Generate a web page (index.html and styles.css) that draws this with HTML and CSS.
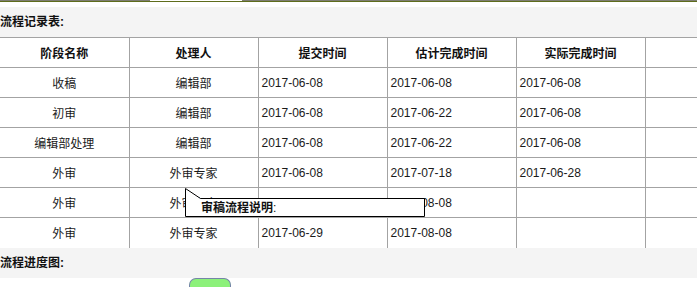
FILE: index.html
```html
<!DOCTYPE html>
<html lang="zh">
<head>
<meta charset="utf-8">
<link rel="stylesheet" href="styles.css">
</head>
<body>
<div class="tabbar"><span class="tab-active"></span></div>
<div class="page">
  <div class="band">流程记录表:</div>
  <table class="flow">
    <thead>
      <tr><th>阶段名称</th><th>处理人</th><th>提交时间</th><th>估计完成时间</th><th>实际完成时间</th><th></th></tr>
    </thead>
    <tbody>
      <tr><td class="c">收稿</td><td class="c">编辑部</td><td>2017-06-08</td><td>2017-06-08</td><td>2017-06-08</td><td></td></tr>
      <tr><td class="c">初审</td><td class="c">编辑部</td><td>2017-06-08</td><td>2017-06-22</td><td>2017-06-08</td><td></td></tr>
      <tr><td class="c">编辑部处理</td><td class="c">编辑部</td><td>2017-06-08</td><td>2017-06-22</td><td>2017-06-08</td><td></td></tr>
      <tr><td class="c">外审</td><td class="c">外审专家</td><td>2017-06-08</td><td>2017-07-18</td><td>2017-06-28</td><td></td></tr>
      <tr><td class="c">外审</td><td class="c">外审专家</td><td>2017-06-29</td><td>2017-08-08</td><td></td><td></td></tr>
      <tr class="last"><td class="c">外审</td><td class="c">外审专家</td><td>2017-06-29</td><td>2017-08-08</td><td></td><td></td></tr>
    </tbody>
  </table>
  <div class="band">流程进度图:</div>
  <div class="progress"><div class="node"></div></div>

  <div class="tip">
    <svg class="tip-shape" width="242" height="30" viewBox="0 0 242 30">
      <path d="M0.5 0.5 L15.5 10.5 L239.5 10.5 L239.5 28.5 L0.5 28.5 Z" fill="#fff" stroke="#000" stroke-width="1"/>
    </svg>
    <span class="tip-text">审稿流程说明<span class="colon">:</span></span>
  </div>
</div>
</body>
</html>
```
FILE: styles.css
```css
html, body {
  margin: 0;
  padding: 0;
  overflow: hidden;
  background: #fff;
}
body {
  font-family: "Liberation Sans", Arial, "Noto Sans CJK SC", sans-serif;
  font-size: 12px;
  color: #1a1a1a;
  position: relative;
  width: 697px;
  height: 287px;
}
.tabbar {
  height: 1px;
  background: #7d7d72;
  border-bottom: 1px solid #5e6c1c;
  position: relative;
}
.tab-active {
  display: block;
  margin-left: 150px;
  width: 92px;
  height: 1px;
  background: #fff;
}
.page {
  padding-top: 5px;
  position: relative;
}
.band {
  background: #f4f4f4;
  height: 30px;
  line-height: 30px;
  font-weight: bold;
  font-size: 12px;
  color: #111;
}
.flow {
  border-collapse: collapse;
  table-layout: fixed;
  width: 774px;
  background: #fff;
}
.flow tr {
  height: 30px;
}
.flow th, .flow td {
  width: 129px;
  height: 30px;
  padding: 0 0 0 3px;
  border: 1px solid #a3a3a3;
  box-sizing: border-box;
  vertical-align: middle;
  white-space: nowrap;
  overflow: hidden;
}
.flow th:first-child, .flow td:first-child {
  border-left: none;
}
.flow th {
  font-weight: bold;
  text-align: center;
  padding: 0;
  color: #111;
}
.flow td.c {
  text-align: center;
  padding: 0;
}
.flow tr.last td {
  border-bottom: none;
}
.progress {
  padding-left: 189px;
}
.node {
  width: 40px;
  height: 20px;
  background: #8cf17a;
  border: 1px solid #7585a8;
  border-bottom: none;
  border-radius: 7px 7px 0 0;
}
.tip {
  position: absolute;
  left: 185px;
  top: 186px;
  width: 242px;
  height: 30px;
}
.tip-shape {
  display: block;
}
.tip-text {
  position: absolute;
  left: 16px;
  top: 12px;
  font-weight: bold;
  font-size: 12px;
  line-height: 16px;
  color: #111;
}
.colon {
  font-weight: normal;
}
```
